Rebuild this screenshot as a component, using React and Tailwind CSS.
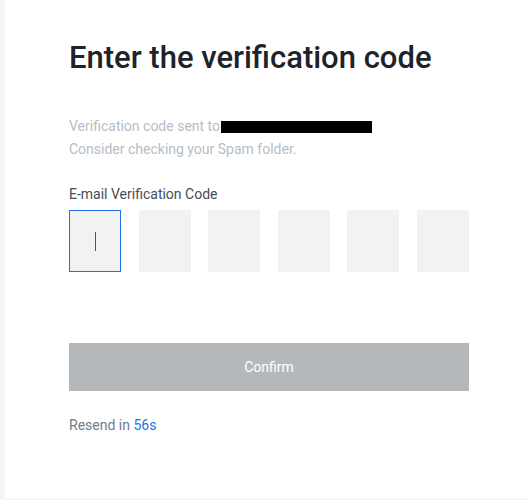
export default function App() {
  const boxes = [0, 1, 2, 3, 4, 5]

  return (
    <div className="w-[528px] h-[500px] bg-[#f3f5f9] pl-[5px] pb-[2px] font-['Roboto',sans-serif]">
      <div className="h-full bg-white pl-[64px] pt-[38px]">
        <div className="w-[400px]">
          <h1 className="text-[31px] leading-[40px] font-medium text-[#1e2329]">Enter the verification code</h1>

          <div className="mt-[37px] text-[14px] leading-[23px] text-[#b7bdc6]">
            <p className="flex items-center">
              Verification code sent to
              <span className="inline-block ml-[1px] w-[151px] h-[12px] bg-black" />
            </p>
            <p>Consider checking your Spam folder.</p>
          </div>

          <p className="mt-[23px] text-[14px] leading-[20px] text-[#474d57]">E-mail Verification Code</p>

          <div className="mt-[6px] flex justify-between">
            {boxes.map(i => (
              <div
                key={i}
                className={
                  i === 0
                    ? 'w-[52px] h-[62px] bg-[#f2f2f2] border border-[#1a73e8] flex items-center justify-center'
                    : 'w-[52px] h-[62px] bg-[#f2f2f2]'
                }
              >
                {i === 0 && <span className="block w-[1px] h-[19px] bg-[#1f5fb8]" />}
              </div>
            ))}
          </div>

          <button className="mt-[71px] w-full h-[48px] bg-[#b5b8bb] text-white text-[14px]">Confirm</button>

          <p className="mt-[24px] text-[14px] leading-[20px] text-[#707a8a]">
            Resend in <span className="text-[#1a73e8]">56s</span>
          </p>
        </div>
      </div>
    </div>
  )
}
